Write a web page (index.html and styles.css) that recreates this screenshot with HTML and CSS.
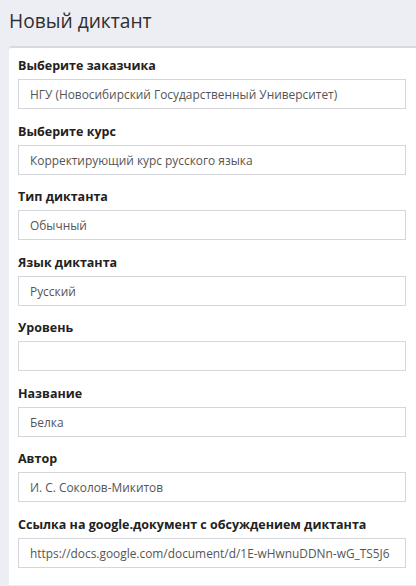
FILE: index.html
```html
<!DOCTYPE html>
<html lang="ru">
<head>
<meta charset="utf-8">
<title>Новый диктант</title>
<link rel="stylesheet" href="styles.css">
</head>
<body>
<div class="page">
  <h1 class="title">Новый диктант</h1>
  <div class="panel">
    <div class="field">
      <div class="label">Выберите заказчика</div>
      <div class="input"><span class="value">НГУ (Новосибирский Государственный Университет)</span></div>
    </div>
    <div class="field">
      <div class="label">Выберите курс</div>
      <div class="input"><span class="value">Корректирующий курс русского языка</span></div>
    </div>
    <div class="field">
      <div class="label">Тип диктанта</div>
      <div class="input"><span class="value">Обычный</span></div>
    </div>
    <div class="field">
      <div class="label">Язык диктанта</div>
      <div class="input"><span class="value">Русский</span></div>
    </div>
    <div class="field">
      <div class="label">Уровень</div>
      <div class="input"><span class="value"></span></div>
    </div>
    <div class="field">
      <div class="label">Название</div>
      <div class="input"><span class="value">Белка</span></div>
    </div>
    <div class="field">
      <div class="label">Автор</div>
      <div class="input"><span class="value">И. С. Соколов-Микитов</span></div>
    </div>
    <div class="field">
      <div class="label">Ссылка на google.документ с обсуждением диктанта</div>
      <div class="input"><span class="value">https://docs.google.com/document/d/1E-wHwnuDDNn-wG_TS5J6</span></div>
    </div>
  </div>
</div>
</body>
</html>
```

FILE: styles.css
```css
html, body {
  margin: 0;
  padding: 0;
  background: #eceef3;
  height: 100%;
  overflow: hidden;
}
.page {
  padding-left: 9px;
  font-family: "Open Sans", "Noto Sans", sans-serif;
}
.title {
  margin: 0;
  height: 46px;
  box-sizing: border-box;
  padding-top: 7px;
  font-size: 19.2px;
  font-weight: 400;
  line-height: 28px;
  color: #2f2f2f;
}
.panel {
  background: #ffffff;
  border-top: 2px solid #d6d9e0;
  border-top-left-radius: 3px;
  padding: 8px 10px 5px 9px;
}
.field {
  margin-bottom: 12.5px;
}
.label {
  font-size: 12.5px;
  font-weight: 700;
  line-height: 20px;
  color: #222;
  margin-bottom: 3px;
}
.input {
  height: 30px;
  box-sizing: border-box;
  border: 1px solid #d5d6dc;
  padding: 0 11px;
  font-size: 11.9px;
  line-height: 28px;
  color: #555;
}
.value {
  display: block;
  height: 28px;
  white-space: nowrap;
  overflow: hidden;
}
```
